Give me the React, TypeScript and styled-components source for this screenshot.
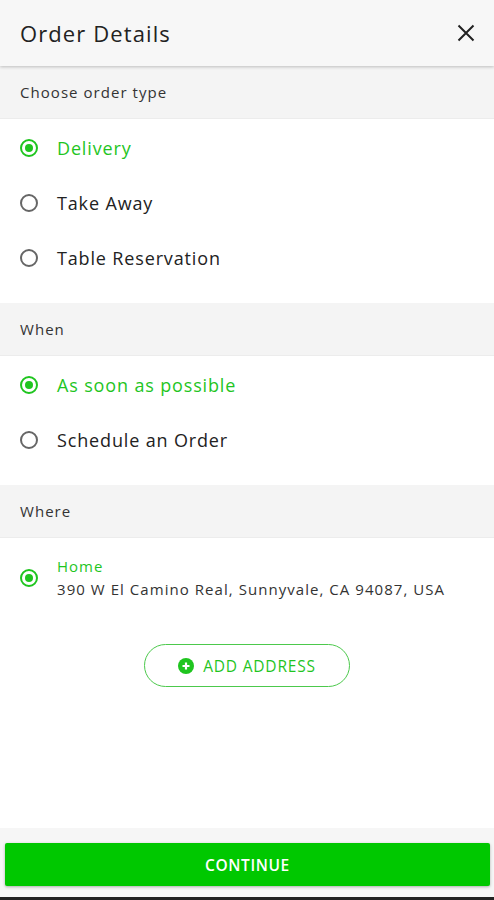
import styled, { createGlobalStyle } from "styled-components";

const GREEN = "#1fc51f";

const Global = createGlobalStyle`
  html, body {
    margin: 0;
    padding: 0;
    background: #ffffff;
    font-family: "Open Sans", "Noto Sans", sans-serif;
  }
  * { box-sizing: border-box; }
`;

const Page = styled.div`
  width: 494px;
  height: 900px;
  display: flex;
  flex-direction: column;
  background: #fff;
  overflow: hidden;
`;

const Header = styled.header`
  height: 66px;
  flex: none;
  display: flex;
  align-items: center;
  justify-content: space-between;
  padding: 0 16px 0 20px;
  background: #f7f7f7;
  box-shadow: 0 1px 3px rgba(0, 0, 0, 0.22);
  position: relative;
  z-index: 1;
`;

const Title = styled.h1`
  margin: 0;
  font-size: 22px;
  font-weight: 400;
  color: #222;
  letter-spacing: 1.1px;
`;

const CloseButton = styled.button`
  border: 0;
  background: none;
  padding: 0;
  width: 24px;
  height: 24px;
  display: flex;
  align-items: center;
  justify-content: center;
  color: #222;
`;

const Body = styled.main`
  flex: 1;
  display: flex;
  flex-direction: column;
`;

const SectionHead = styled.div`
  height: 53px;
  display: flex;
  align-items: center;
  padding: 0 20px;
  background: #f4f4f4;
  border-bottom: 1px solid #ececec;
  font-size: 15px;
  color: #333;
  letter-spacing: 1.05px;
`;

const Options = styled.div`
  padding: 1px 0 18px;
  display: flex;
  flex-direction: column;
`;

const Option = styled.div`
  height: 55px;
  display: flex;
  align-items: center;
  gap: 19px;
  padding: 0 20px;
`;

const Radio = styled.span<{ $on?: boolean }>`
  width: 18px;
  height: 18px;
  flex: none;
  border-radius: 50%;
  border: 2px solid ${(p) => (p.$on ? GREEN : "#666")};
  display: flex;
  align-items: center;
  justify-content: center;
  &::after {
    content: "";
    width: 8px;
    height: 8px;
    border-radius: 50%;
    background: ${(p) => (p.$on ? GREEN : "transparent")};
  }
`;

const Label = styled.span<{ $on?: boolean }>`
  font-size: 18px;
  color: ${(p) => (p.$on ? GREEN : "#222")};
  letter-spacing: 0.85px;
`;

const AddressRow = styled.div`
  display: flex;
  align-items: center;
  gap: 19px;
  padding: 18px 20px 0;
`;

const AddressText = styled.div`
  display: flex;
  flex-direction: column;
  gap: 3px;
`;

const AddressName = styled.span`
  font-size: 15px;
  color: ${GREEN};
  letter-spacing: 1px;
`;

const AddressLine = styled.span`
  font-size: 15px;
  color: #333;
  letter-spacing: 1.05px;
`;

const AddButton = styled.button`
  align-self: center;
  margin-top: 45px;
  width: 206px;
  height: 43px;
  border-radius: 22px;
  border: 1px solid #4cc94c;
  background: #fff;
  display: flex;
  align-items: center;
  justify-content: center;
  gap: 9px;
  font-family: inherit;
  font-size: 15.5px;
  color: ${GREEN};
  letter-spacing: 0.8px;
`;

const Footer = styled.footer`
  flex: none;
  height: 72px;
  background: #f6f6f6;
  padding: 15px 4px 0 5px;
  border-bottom: 3px solid #222;
`;

const Continue = styled.button`
  width: 100%;
  height: 43px;
  border: 0;
  border-radius: 2px;
  background: #00c800;
  color: #fff;
  font-family: inherit;
  font-size: 15.5px;
  font-weight: 600;
  letter-spacing: 0.6px;
  box-shadow: 0 1px 3px rgba(0, 0, 0, 0.3);
`;

type Opt = { label: string; on?: boolean };

const orderTypes: Opt[] = [
  { label: "Delivery", on: true },
  { label: "Take Away" },
  { label: "Table Reservation" },
];

const whenOpts: Opt[] = [
  { label: "As soon as possible", on: true },
  { label: "Schedule an Order" },
];

function OptionList({ items }: { items: Opt[] }) {
  return (
    <Options>
      {items.map((o) => (
        <Option key={o.label}>
          <Radio $on={o.on} />
          <Label $on={o.on}>{o.label}</Label>
        </Option>
      ))}
    </Options>
  );
}

export default function App() {
  return (
    <Page>
      <Global />
      <Header>
        <Title>Order Details</Title>
        <CloseButton aria-label="close">
          <svg width="18" height="18" viewBox="0 0 18 18">
            <path d="M1.5 1.5 L16.5 16.5 M16.5 1.5 L1.5 16.5" stroke="#222" strokeWidth="2" />
          </svg>
        </CloseButton>
      </Header>
      <Body>
        <SectionHead>Choose order type</SectionHead>
        <OptionList items={orderTypes} />
        <SectionHead>When</SectionHead>
        <OptionList items={whenOpts} />
        <SectionHead>Where</SectionHead>
        <AddressRow>
          <Radio $on />
          <AddressText>
            <AddressName>Home</AddressName>
            <AddressLine>390 W El Camino Real, Sunnyvale, CA 94087, USA</AddressLine>
          </AddressText>
        </AddressRow>
        <AddButton>
          <svg width="16" height="16" viewBox="0 0 16 16">
            <circle cx="8" cy="8" r="8" fill={GREEN} />
            <path d="M8 4.5 V11.5 M4.5 8 H11.5" stroke="#fff" strokeWidth="2.2" />
          </svg>
          ADD ADDRESS
        </AddButton>
      </Body>
      <Footer>
        <Continue>CONTINUE</Continue>
      </Footer>
    </Page>
  );
}
